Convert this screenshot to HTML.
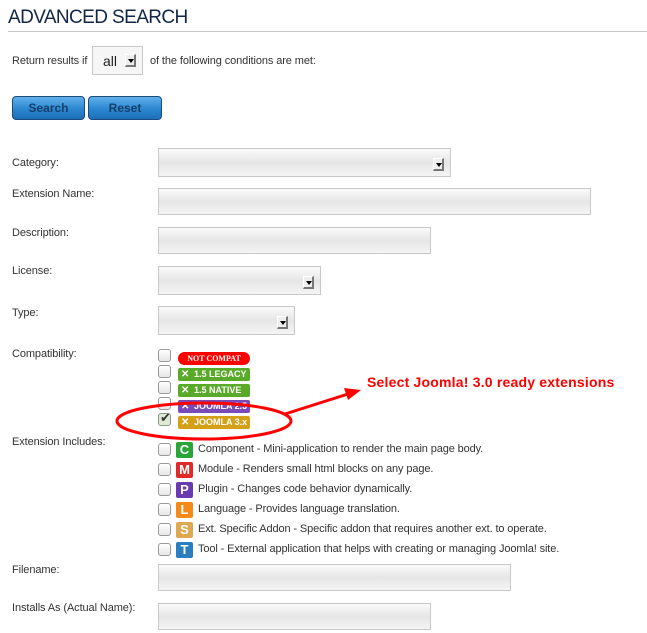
<!DOCTYPE html>
<html><head><meta charset="utf-8"><style>
*{margin:0;padding:0;box-sizing:border-box}
body{width:647px;height:633px;background:#fff;font-family:"Liberation Sans",Arial,sans-serif;font-size:11px;color:#333;position:relative;overflow:hidden}
.a{position:absolute}
h1{position:absolute;left:8px;top:7px;font-size:19px;font-weight:normal;color:#12264a;letter-spacing:-0.6px}
.hr{left:8px;top:31px;width:639px;height:1px;background:#c8c8c8}
.lbl{position:absolute;left:12px;font-size:11px;color:#333;letter-spacing:-0.1px}
.inp{position:absolute;border:1px solid #c8c8c8;background:linear-gradient(#fafafa,#e6e6e6 50%,#f4f4f4)}
.dd{position:absolute;right:6px;top:9px;width:11px;height:13px;background:#eee;border-right:2px solid #777;border-bottom:2px solid #777;border-left:1px solid #fff;border-top:1px solid #fff}
.dd:after{content:"";position:absolute;left:2px;top:4px;border-left:3px solid transparent;border-right:3px solid transparent;border-top:4px solid #000}
.btn{position:absolute;top:96px;height:24px;border:1px solid #1c4a7a;border-radius:4px;background:linear-gradient(#5fb0ea,#2b86d0 55%,#1e6fb8);color:#173f6a;font-weight:bold;font-size:12px;text-align:center;line-height:22px}
.cb{position:absolute;left:158px;width:13px;height:13px;border:1px solid #999;border-radius:3px;background:linear-gradient(#fff,#e6e6e6)}
.bd{position:absolute;left:178px;width:72px;height:13px;border-radius:2px;color:#fff;font-weight:bold;font-size:9px;line-height:13px;padding-left:16px}
.bd .x{position:absolute;left:3px;top:0;font-size:10px}
.ic{position:absolute;left:176px;width:17px;height:16px;border-radius:2px;color:#fff;font-weight:bold;font-size:13px;text-align:center;line-height:16px}
.it{position:absolute;left:198px;font-size:11px;color:#333;letter-spacing:-0.12px}
</style></head><body>
<h1>ADVANCED SEARCH</h1>
<div class="a hr"></div>
<div class="lbl" style="top:55px">Return results if</div>
<div class="inp" style="left:92px;top:46px;width:51px;height:29px;background:#f6f6f6"><span class="a" style="left:10px;top:6px;font-size:14px;color:#222">all</span><div class="dd" style="top:7px;right:6px"></div></div>
<div class="lbl" style="top:55px;left:150px">of the following conditions are met:</div>
<div class="btn" style="left:12px;width:73px">Search</div>
<div class="btn" style="left:88px;width:74px">Reset</div>

<div class="lbl" style="top:157px">Category:</div>
<div class="inp" style="left:158px;top:148px;width:293px;height:29px"><div class="dd"></div></div>
<div class="lbl" style="top:188px">Extension Name:</div>
<div class="inp" style="left:158px;top:188px;width:433px;height:27px"></div>
<div class="lbl" style="top:227px">Description:</div>
<div class="inp" style="left:158px;top:227px;width:273px;height:27px"></div>
<div class="lbl" style="top:265px">License:</div>
<div class="inp" style="left:158px;top:266px;width:163px;height:29px"><div class="dd"></div></div>
<div class="lbl" style="top:307px">Type:</div>
<div class="inp" style="left:158px;top:306px;width:137px;height:29px"><div class="dd"></div></div>
<div class="lbl" style="top:348px">Compatibility:</div>

<div class="cb" style="top:349px"></div>
<div class="bd" style="top:352px;background:#f00;border-radius:7px;padding-left:0;text-align:center;font-family:'Liberation Serif',serif;font-size:8px">NOT COMPAT</div>
<div class="cb" style="top:365px"></div>
<div class="bd" style="top:368px;background:#5aaa2a"><span class="x">✕</span>1.5 LEGACY</div>
<div class="cb" style="top:381px"></div>
<div class="bd" style="top:384px;background:#5aaa2a"><span class="x">✕</span>1.5 NATIVE</div>
<div class="cb" style="top:397px"></div>
<div class="bd" style="top:400px;background:#7a4ab8"><span class="x">✕</span>JOOMLA 2.5</div>
<div class="cb" style="top:413px;background:#dfe9d5;border-color:#8a9a80"><span class="a" style="left:1px;top:-4px;font-size:13px;color:#333">✔</span></div>
<div class="bd" style="top:416px;background:#d4a017"><span class="x">✕</span>JOOMLA 3.x</div>

<div class="lbl" style="top:436px">Extension Includes:</div>
<div class="cb" style="top:443px"></div><div class="ic" style="top:442px;background:#2aa53a">C</div><div class="it" style="top:443px">Component - Mini-application to render the main page body.</div>
<div class="cb" style="top:463px"></div><div class="ic" style="top:462px;background:#e02a2a">M</div><div class="it" style="top:463px">Module - Renders small html blocks on any page.</div>
<div class="cb" style="top:483px"></div><div class="ic" style="top:482px;background:#6a3ab0">P</div><div class="it" style="top:483px">Plugin - Changes code behavior dynamically.</div>
<div class="cb" style="top:503px"></div><div class="ic" style="top:502px;background:#f58a1a">L</div><div class="it" style="top:503px">Language - Provides language translation.</div>
<div class="cb" style="top:523px"></div><div class="ic" style="top:522px;background:#e0a850">S</div><div class="it" style="top:523px">Ext. Specific Addon - Specific addon that requires another ext. to operate.</div>
<div class="cb" style="top:543px"></div><div class="ic" style="top:542px;background:#2a7ec0">T</div><div class="it" style="top:543px">Tool - External application that helps with creating or managing Joomla! site.</div>

<div class="lbl" style="top:564px">Filename:</div>
<div class="inp" style="left:158px;top:564px;width:353px;height:27px"></div>
<div class="lbl" style="top:602px">Installs As (Actual Name):</div>
<div class="inp" style="left:158px;top:603px;width:273px;height:27px"></div>

<div class="a" style="left:367px;top:374px;font-size:14px;font-weight:bold;color:#f00;letter-spacing:0.2px">Select Joomla! 3.0 ready extensions</div>
<svg class="a" style="left:0;top:0" width="647" height="633">
<ellipse cx="204" cy="421" rx="87" ry="18" fill="none" stroke="#f00" stroke-width="3"/>
<line x1="285" y1="414" x2="348" y2="394" stroke="#f00" stroke-width="3"/>
<polygon points="361,390 344,388 348,400" fill="#f00"/>
</svg>
</body></html>
